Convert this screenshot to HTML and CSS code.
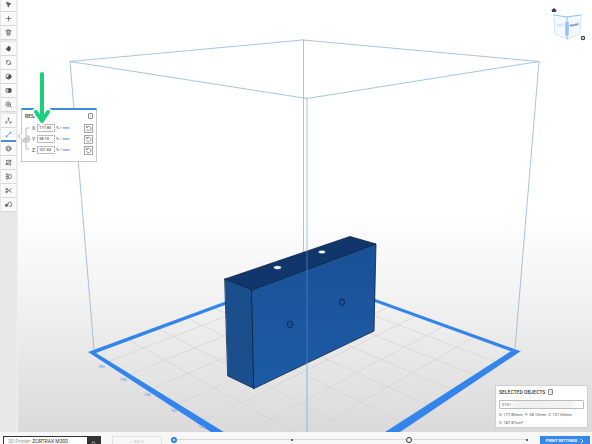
FILE: index.html
```html
<!DOCTYPE html>
<html lang="en">
<head>
<meta charset="utf-8">
<title>Print workspace</title>
<link rel="stylesheet" href="styles.css">
</head>
<body>
<div class="workspace">
  <nav class="sidebar" aria-label="Tools">
    <div class="tool-group">
      <button class="tool" aria-label="Select"><svg viewBox="0 0 12 12"><path class="solid" d="M3 2l7 3-3 1-1 4z"/></svg></button>
      <button class="tool" aria-label="Add"><svg viewBox="0 0 12 12"><path d="M6 2v8M2 6h8"/></svg></button>
      <button class="tool" aria-label="Delete"><svg viewBox="0 0 12 12"><path d="M1.500 3h9M4 3V1.500h4V3M3 4l.5 6.500h5L9 4M5 5v4M7 5v4"/></svg></button>
    </div>
    <div class="tool-group">
      <button class="tool" aria-label="Pan"><svg viewBox="0 0 12 12"><path class="solid" d="M4 6l1-3 1-1 2 1 1 1v4l-1 2H5L2 7z"/></svg></button>
      <button class="tool" aria-label="Rotate view"><svg viewBox="0 0 12 12"><path d="M4 9A3.700 3.700 0 0 1 6 2.500M8 3a3.700 3.700 0 0 1-2 6.700M2 3.500h2.500M10 8.500H7.500"/></svg></button>
      <button class="tool" aria-label="Shading"><svg viewBox="0 0 12 12"><circle cx="6" cy="6" r="4.300"/><path class="solid" d="M3 8l3-1 1-4 3 1v4L7 10z"/></svg></button>
      <button class="tool" aria-label="Split view"><svg viewBox="0 0 12 12"><rect x="1.500" y="3" width="9" height="6" rx="1"/><path class="solid" d="M6 3h4v6H6z"/></svg></button>
      <button class="tool" aria-label="Zoom"><svg viewBox="0 0 12 12"><circle cx="5.500" cy="5.500" r="4"/><path d="M4 5.500h3M5.500 4v3M8.500 8.500l2.500 2.500"/></svg></button>
    </div>
    <div class="tool-group">
      <button class="tool" aria-label="Move"><svg viewBox="0 0 12 12"><path d="M6 2v4M4 7.500L2 9.500M8 7.500l2 2M5 2.500h2M1.500 8v2h2M10.500 8v2h-2"/></svg></button>
      <button class="tool tool-active" aria-label="Resize"><svg viewBox="0 0 12 12"><path d="M2.500 9.500l7-7M2 8v2h2M8 2h2v2"/></svg></button>
      <button class="tool" aria-label="Rotate"><svg viewBox="0 0 12 12"><circle cx="6" cy="6" r="4.300"/><path d="M4 5l2-1 2 1v2.500L6 9 4 7.500z"/></svg></button>
      <button class="tool" aria-label="Scale to fit"><svg viewBox="0 0 12 12"><path d="M3 2.500h4M3 2.500V9h6V5M1 9h2M9 9v2M3 9l7-7M8 2h2v2"/></svg></button>
      <button class="tool" aria-label="Mirror"><svg viewBox="0 0 12 12"><path d="M2 2h3M3.500 2v3M2 6h3M2 10h3M3.500 7v3M7 2.500h1a3.500 3.500 0 0 1 0 7H7z"/></svg></button>
      <button class="tool" aria-label="Cut"><svg viewBox="0 0 12 12"><path d="M3.500 4L11 9M3.500 8L11 3"/><circle cx="2.500" cy="3.500" r="1.300"/><circle cx="2.500" cy="8.500" r="1.300"/></svg></button>
      <button class="tool" aria-label="Supports"><svg viewBox="0 0 12 12"><path class="solid" d="M1 6h3v3H1z"/><path d="M5 5a3 3 0 0 1 6 0v4H8M5 5v2"/></svg></button>
    </div>
  </nav>

  <main class="stage">
    <svg class="scene" viewBox="18 0 574 432" preserveAspectRatio="xMidYMid slice" role="img" aria-label="Model on the build platform">
      <defs>
        <linearGradient id="front" x1="0" y1="0" x2="0" y2="1"><stop offset="0" stop-color="#1a5196"/><stop offset="1" stop-color="#1d5ba6"/></linearGradient>
      </defs>
      <g class="floor-grid">
        <path d="M320 280L110 361M342 288L131 374M366 297L154 388M391 306L179 404M418 315L206 420M446 325L235 438M476 336L266 457"/>
        <path d="M283 281L496 362M260 290L475 375M237 298L453 390M212 307L428 405M185 317L402 422M157 328L374 441M127 339L343 460"/>
      </g>
      <path class="floor-edge" d="M88 352L303 273 520 351 513 352 303 276 96 353 227 434H214z"/>
      <path class="floor-edge" d="M521 351L397 434H382L511 351z"/>
      <path class="floor-edge" d="M427 406l5 2v2h-6z"/>
      <g class="floor-labels">
        <text transform="translate(98 367) rotate(12)">280</text>
        <text transform="translate(120 380) rotate(12)">240</text>
        <text transform="translate(144 395) rotate(12)">200</text>
        <text transform="translate(170 411) rotate(12)">160</text>
        <text transform="translate(198 427) rotate(12)">120</text>
      </g>
      <path class="volume" d="M303.500 40V274M303 40L70 61.500 94 350M303 40L539 61.500 515 349"/>
      <g class="model">
        <path fill="#10366b" d="M225 279L350 236.500 376 244 252 290z"/>
        <path fill="#1a4e8d" d="M225 279L252 290 254 388.500 228 376z"/>
        <path fill="url(#front)" d="M252 290L376 244 374 331 254 388.500z"/>
        <ellipse class="hole" cx="277.500" cy="267.500" rx="4" ry="1.800"/>
        <ellipse class="hole" cx="322" cy="252" rx="3.500" ry="1.700"/>
        <ellipse class="bore" cx="290" cy="324.500" rx="2.600" ry="3.500"/>
        <ellipse class="bore" cx="342" cy="302.300" rx="2.600" ry="3.500"/>
      </g>
      <path class="volume" d="M70 61.500L307 98.500 539 61.500"/>
      <path class="volume" d="M307 98.500V251"/>
      <path class="volume-inner" d="M307 251V363"/>
      <path class="volume-front" d="M307 363V432"/>
    </svg>

    <section class="resize-panel">
      <header class="panel-head"><h2>RESIZE</h2><button class="info" aria-label="Resize help">i</button></header>
      <div class="resize-body">
        <svg class="link" viewBox="0 0 10 32" aria-hidden="true"><path d="M7 5H4v21h3M4 16h4"/><rect x="1" y="13" width="6" height="6" rx="1"/><path d="M3 15h2v2H3z"/></svg>
        <div class="axes">
          <div class="axis"><label for="sx">X:</label><input id="sx" value="177.80"><i class="spin"></i><span class="units">% / <b>mm</b></span><button class="reset" aria-label="Reset X"><svg viewBox="0 0 10 10"><path d="M3 2.500A3.300 3.300 0 1 1 2 6M2 1.500v2h2"/></svg></button></div>
          <div class="axis"><label for="sy">Y:</label><input id="sy" value="38.10"><i class="spin"></i><span class="units">% / <b>mm</b></span><button class="reset" aria-label="Reset Y"><svg viewBox="0 0 10 10"><path d="M3 2.500A3.300 3.300 0 1 1 2 6M2 1.500v2h2"/></svg></button></div>
          <div class="axis"><label for="sz">Z:</label><input id="sz" value="101.60"><i class="spin"></i><span class="units">% / <b>mm</b></span><button class="reset" aria-label="Reset Z"><svg viewBox="0 0 10 10"><path d="M3 2.500A3.300 3.300 0 1 1 2 6M2 1.500v2h2"/></svg></button></div>
        </div>
      </div>
    </section>

    <svg class="pointer" viewBox="0 0 18 56" aria-hidden="true">
      <path class="halo" d="M9 39v10M3 42l6 9 6-9"/>
      <path d="M9 4v46M3 42l6 9 6-9"/>
    </svg>

    <svg class="view-cube" viewBox="0 0 38 36" role="img" aria-label="View orientation">
      <path class="solid" d="M4 3l3 2.500H6V7H2V5.500H1z"/>
      <path fill="#f3f8fd" d="M4 10l13 2v22L5 29zM17 12l14-2-1 19-13 5z"/>
      <path fill="#a9cdf6" d="M15 17h4v13l-2 1-2-1z"/>
      <path class="cube-top" d="M4 10l13 2 14-2"/>
      <path class="cube-side" d="M4 10l1 19 12 5 13-5 1-19"/>
      <path class="cube-top" d="M17 12v22"/>
      <text class="cube-left" transform="translate(7 21) rotate(5)">LEFT</text>
      <text class="cube-front" transform="translate(20 22) rotate(-13)">FRONT</text>
      <circle class="gear" cx="33" cy="33" r="1.600"/>
    </svg>

    <section class="selected-panel">
      <header class="selected-head"><h2>SELECTED OBJECTS</h2><button class="info" aria-label="Selection help">i</button></header>
      <input class="object-name" aria-label="Object name" value="0151 -">
      <p>X: 177.80mm&nbsp; Y: 38.10mm&nbsp; Z: 101.60mm</p>
      <p>V: 187.87cm³</p>
    </section>
  </main>
</div>

<footer class="bottom-bar">
  <div class="printer">
    <label for="printer">3D Printer:</label>
    <select id="printer"><option>ZORTRAX M300</option></select>
    <span class="printer-toggle"><svg viewBox="0 0 6 4"><path d="M1 3l2-2 2 2"/></svg></span>
  </div>
  <button class="back" disabled>&lt;&nbsp; BACK</button>
  <ol class="steps" aria-label="Progress">
    <li class="step step-current"></li>
    <li class="step step-small"></li>
    <li class="step step-ring"></li>
    <li class="step step-small"></li>
  </ol>
  <button class="print">PRINT SETTINGS <svg viewBox="0 0 4 6"><path d="M1 1l2 2-2 2"/></svg></button>
</footer>
</body>
</html>
```
FILE: styles.css
```css
* { box-sizing: border-box; }

body {
  margin: 0;
  height: 100vh;
  overflow: hidden;
  display: flex;
  flex-direction: column;
  font: 5px/8px Roboto, "Liberation Sans", sans-serif;
  color: #555;
}

h2, p, ol { margin: 0; padding: 0; }
button, input, select { font: inherit; color: inherit; margin: 0; padding: 0; border: 0; background: none; border-radius: 0; }
svg { display: block; fill: none; stroke-linecap: round; }

.workspace { flex: 1; min-height: 0; display: flex; }

/* Tool column */
.sidebar {
  width: 18px;
  padding: 0 1px;
  background: #e8e8e8;
  border-right: 1px solid #f0f0f0;
  overflow: hidden;
  display: flex;
  flex-direction: column;
  gap: 2px;
}
.tool-group { display: flex; flex-direction: column; }
.tool-group:first-child { margin-top: -2px; }
.tool {
  height: 14px;
  background: #fafafa;
  border-bottom: 1px solid #d8d8d8;
  display: grid;
  place-items: center;
}
.tool svg { width: 7px; height: 7px; stroke: #555; stroke-width: 1.2; }
.tool .solid { fill: #4a4a4a; }
.tool-active { border-bottom: 2px solid #4a8fd8; }
.tool-active svg { stroke: #3b88df; }

/* 3D stage */
.stage {
  position: relative;
  flex: 1;
  min-width: 0;
  background: linear-gradient(#fff 0, #fff 48%, #f3f3f3 68%, #dadada 100%);
}
.scene { width: 100%; height: 100%; }
.floor-grid { stroke: #d2d3d5; stroke-width: .7; }
.floor-edge { fill: #3385ec; }
.floor-labels { font-size: 4px; font-style: italic; font-weight: 500; fill: #6fa3e8; }
.volume { stroke: #8db5dc; stroke-width: .8; }
.volume-inner { stroke: #4a80c4; stroke-width: .8; }
.volume-front { stroke: #8bb0e8; stroke-width: 1; }
.model { stroke: #0b2343; stroke-width: .8; stroke-linejoin: round; }
.model .hole { fill: #fff; stroke-width: .4; }
.model .bore { fill: #1a4f95; stroke-width: .8; }

.info {
  width: 5px;
  height: 6px;
  border: 1px solid #888;
  border-radius: 1px;
  font-size: 4px;
  line-height: 4px;
}

/* Resize panel */
.resize-panel {
  position: absolute;
  left: 3px;
  top: 108px;
  width: 76px;
  height: 54px;
  padding: 2px 3px 0;
  background: #fff;
  border: 1px solid #c9c9c9;
  border-top: 2px solid #3d8be0;
  border-radius: 1px;
}
.resize-panel::before {
  content: "";
  position: absolute;
  left: -3px;
  top: 23px;
  width: 5px;
  height: 5px;
  background: #fff;
  border: solid #c9c9c9;
  border-width: 0 0 1px 1px;
  transform: rotate(45deg);
}
.panel-head { display: flex; justify-content: space-between; align-items: center; height: 8px; }
.panel-head h2, .selected-head h2 { font-size: 5px; line-height: 8px; font-weight: 500; color: #333; }
.resize-body { display: flex; margin-top: 3px; }
.link { flex: none; width: 10px; height: 32px; margin-left: -3px; stroke: #aaa; stroke-width: .8; }
.link rect { fill: #e5e5e5; }
.axes { flex: 1; display: grid; grid-template-rows: repeat(3, 10px); row-gap: 1px; }
.axis { display: flex; align-items: center; }
.axis label { width: 5px; flex: none; }
.axis input {
  width: 15px;
  height: 8px;
  padding-left: 1px;
  border: 1px solid #bdbdbd;
  border-right: 0;
  flex: none;
  font-size: 4px;
  color: #333;
}
.spin { width: 3px; height: 8px; border: 1px dotted #999; border-left: 0; margin-right: 1px; }
.units { font-size: 4px; white-space: nowrap; }
.units b { font-weight: 500; color: #3b88df; }
.reset {
  width: 9px;
  height: 9px;
  margin-left: auto;
  border: 1px solid #a8a8a8;
  background: #fdfdfd;
}
.reset svg { width: 7px; height: 7px; stroke: #777; stroke-width: 1; }

.pointer {
  position: absolute;
  left: 15px;
  top: 70px;
  width: 18px;
  height: 56px;
  stroke: #1bd07d;
  stroke-width: 4;
  stroke-linejoin: round;
}
.pointer .halo { stroke: #fff; stroke-width: 8; }

/* View cube */
.view-cube { position: absolute; right: 4px; top: 5px; width: 38px; height: 36px; }
.view-cube .solid { fill: #444; }
.cube-top { stroke: #79aef0; stroke-width: .8; }
.cube-side { stroke: #bcd5ee; stroke-width: .6; }
.cube-left { font-size: 3px; fill: #6fa5e8; }
.cube-front { font-size: 3px; font-weight: 700; fill: #2e5f9f; }
.gear { stroke: #444; stroke-width: 1.3; }

/* Selection panel */
.selected-panel {
  position: absolute;
  right: 4px;
  bottom: 4px;
  width: 93px;
  height: 43px;
  padding: 2px 3px;
  background: #fff;
  border: 1px solid #d0d0d0;
  border-radius: 1px;
}
.selected-head { display: flex; align-items: center; gap: 3px; }
.object-name {
  display: block;
  width: 100%;
  height: 9px;
  margin: 4px 0 2px;
  padding-left: 2px;
  border: 1px solid #bdbdbd;
  border-radius: 1px;
  font-size: 4px;
  background: linear-gradient(90deg, #fff 12%, #f0f0f0 20%, #f3f3f3 85%, #fff 95%);
}
.selected-panel p { font-size: 4px; white-space: nowrap; }

/* Bottom bar */
.bottom-bar {
  height: 12px;
  padding: 4px 2px 0 3px;
  background: #f7f7f7;
  display: flex;
  align-items: flex-start;
}
.printer {
  flex: none;
  width: 98px;
  height: 14px;
  padding-left: 4px;
  border: 1px solid #333;
  background: #fff;
  display: flex;
  line-height: 9px;
}
.printer label { color: #999; }
.printer select { flex: 1; height: 9px; margin-left: 1px; appearance: none; color: #333; }
.printer-toggle { width: 13px; height: 13px; padding: 4px; background: #333; }
.printer-toggle svg { width: 5px; height: 3px; stroke: #fff; }
.back {
  flex: none;
  width: 50px;
  height: 14px;
  margin: 0 9px 0 11px;
  border: 1px solid #e2e2e2;
  color: #c8c8c8;
  font-size: 4px;
  line-height: 10px;
  display: flex;
  justify-content: center;
}
.steps {
  flex: 1;
  height: 7px;
  margin-right: 12px;
  list-style: none;
  display: flex;
  align-items: center;
  justify-content: space-between;
  background: linear-gradient(#d8d8d8, #d8d8d8) center / 100% 1px no-repeat;
}
.step { border-radius: 50%; background: #f7f7f7; }
.step-current { width: 6px; height: 6px; border: 2px solid #2f80e4; }
.step-ring { width: 6px; height: 6px; border: 1px solid #333; }
.step-small { width: 2px; height: 2px; background: #333; }
.print {
  flex: none;
  width: 50px;
  height: 14px;
  background: #3388ee;
  color: #fff;
  font-size: 4px;
  font-weight: 700;
  line-height: 10px;
  display: flex;
  justify-content: center;
  gap: 3px;
}
.print svg { width: 4px; height: 6px; margin-top: 2px; stroke: #fff; }
```
